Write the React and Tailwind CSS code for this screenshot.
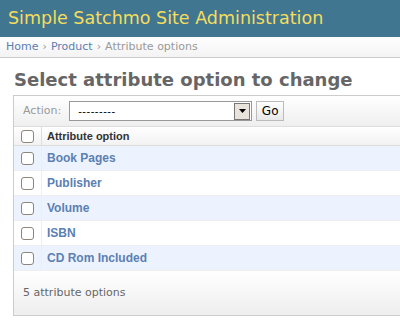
import React from 'react';

const rows = ['Book Pages', 'Publisher', 'Volume', 'ISBN', 'CD Rom Included'];

function Box() {
  return <span className="block w-[13px] h-[13px] rounded-[3px] border border-[#8e857c] bg-white" />;
}

export default function App() {
  return (
    <div className="w-[400px] h-[328px] overflow-hidden bg-white font-['DejaVu_Sans',sans-serif]">
      <div className="h-[37px] bg-[#417690] flex items-center pl-[8px]">
        <h1 className="text-[#f5dd5d] text-[17.5px] leading-none">Simple Satchmo Site Administration</h1>
      </div>
      <div className="h-[21px] border-b border-[#ccc] bg-gradient-to-b from-white to-[#f3f3f3] flex items-center pl-[6px] text-[11px] text-[#999]">
        <span className="text-[#5b80b2]">Home</span>
        <span className="mx-[4px]">›</span>
        <span className="text-[#5b80b2]">Product</span>
        <span className="mx-[4px]">›</span>
        <span>Attribute options</span>
      </div>
      <div className="pl-[13px]">
        <h2 className="pl-[1px] pt-[10px] h-[37px] text-[18px] font-bold text-[#666] leading-[24px]">Select attribute option to change</h2>
        <div className="w-[420px] border-l border-t border-b border-[#ccc]">
          <div className="h-[31px] border-b border-[#ddd] bg-gradient-to-b from-white to-[#efefef] flex items-center pl-[9px] gap-[8px] text-[11px] text-[#999]">
            <span>Action:</span>
            <div className="w-[183px] h-[20px] border border-[#999] bg-white flex items-center justify-between">
              <span className="pl-[8px] text-black text-[11px] font-['Liberation_Sans',sans-serif] tracking-[0.5px]">---------</span>
              <span className="w-[16px] h-[17px] mr-[1px] border border-[#777] bg-[#e8e4dc] flex items-center justify-center">
                <svg width="7" height="4" viewBox="0 0 7 4"><path d="M0 0h7L3.5 4z" fill="#000" /></svg>
              </span>
            </div>
            <span className="ml-[-4px] w-[28px] h-[20px] border border-[#bbb] bg-gradient-to-b from-white to-[#e8e8e8] text-black text-[12px] flex items-center justify-center">Go</span>
          </div>
          <div className="h-[19px] flex items-center border-b border-[#ddd] bg-gradient-to-b from-white to-[#f2f2f2]">
            <div className="w-[28px] h-full flex items-center pl-[7px] border-r border-[#ddd]"><Box /></div>
            <span className="pl-[5px] text-[11px] font-bold text-[#333] font-['Liberation_Sans',sans-serif]">Attribute option</span>
          </div>
          {rows.map((r, i) => (
            <div key={r} className={`h-[25px] flex items-center border-b border-[#eee] ${i % 2 === 0 ? 'bg-[#edf3fe]' : 'bg-white'}`}>
              <div className="w-[28px] h-full flex items-center pl-[7px] border-r border-[#eee]"><Box /></div>
              <span className="pl-[5px] text-[12px] font-bold text-[#5b80b2] font-['Liberation_Sans',sans-serif]">{r}</span>
            </div>
          ))}
          <div className="h-[44px] bg-gradient-to-b from-white to-[#eee] flex items-center pl-[9px] text-[11px] text-[#666]">
            5 attribute options
          </div>
        </div>
      </div>
    </div>
  );
}
